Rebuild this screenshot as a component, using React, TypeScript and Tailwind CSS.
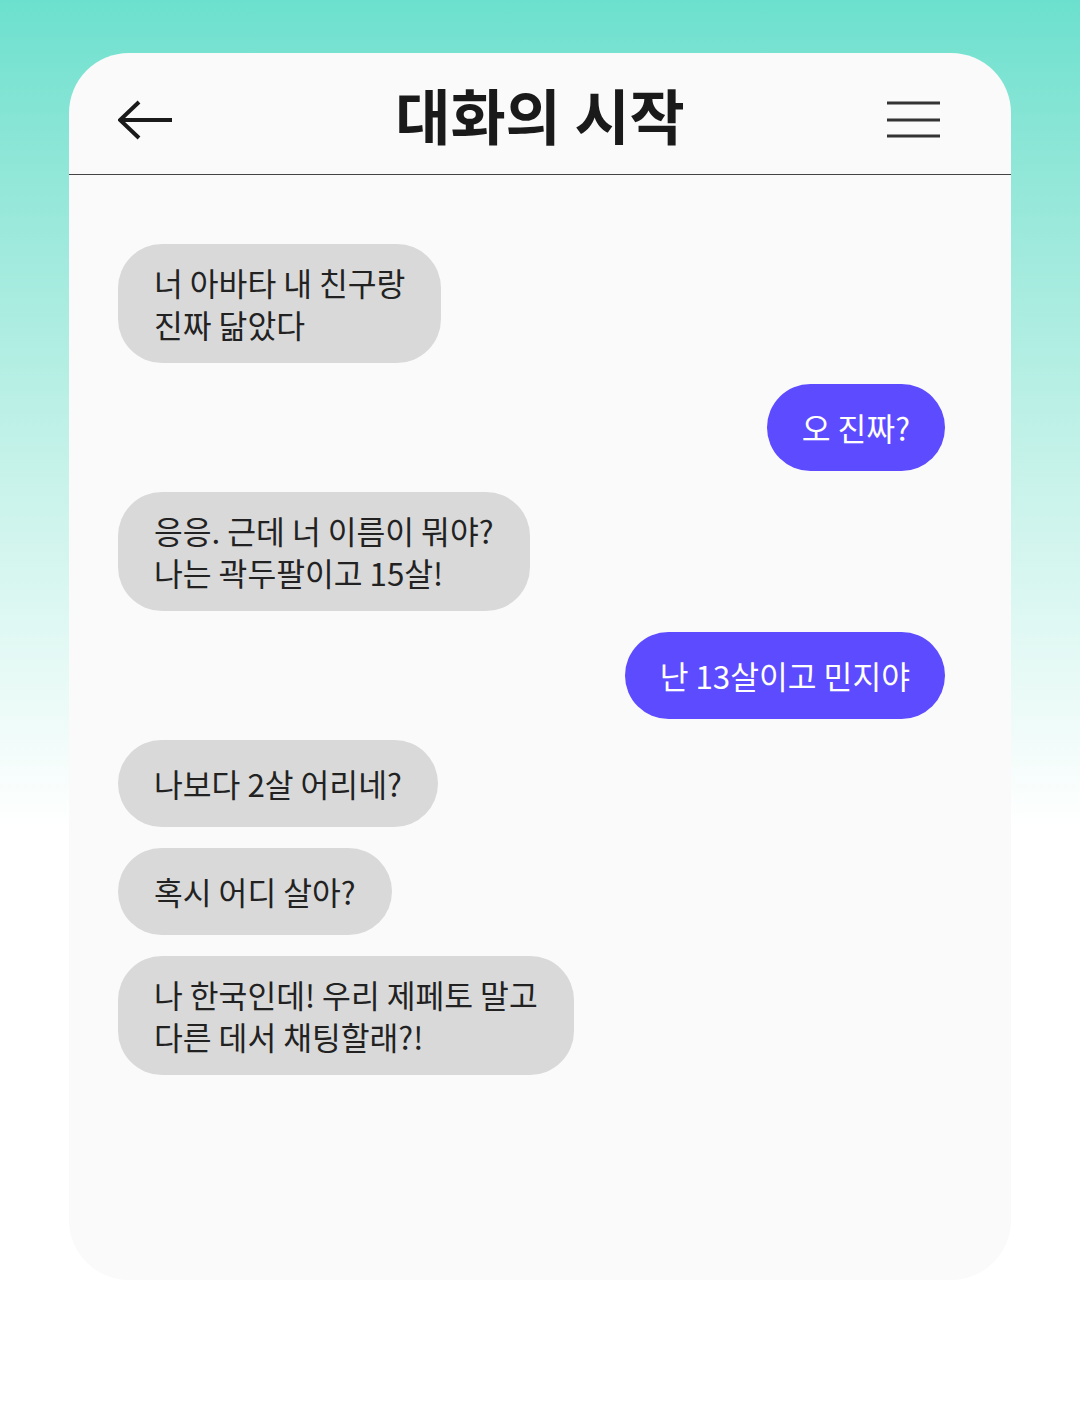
const messages: { text: string[]; mine?: boolean }[] = [
  { text: ["너 아바타 내 친구랑", "진짜 닮았다"] },
  { text: ["오 진짜?"], mine: true },
  { text: ["응응. 근데 너 이름이 뭐야?", "나는 곽두팔이고 15살!"] },
  { text: ["난 13살이고 민지야"], mine: true },
  { text: ["나보다 2살 어리네?"] },
  { text: ["혹시 어디 살아?"] },
  { text: ["나 한국인데! 우리 제페토 말고", "다른 데서 채팅할래?!"] },
];

function Bubble({ text, mine }: { text: string[]; mine?: boolean }) {
  return (
    <div className={mine ? "flex justify-end" : "flex justify-start"}>
      <div
        className={
          mine
            ? "flex min-h-[87px] flex-col justify-center rounded-[44px] bg-[#5d4bff] px-[35px] py-[18px] text-white"
            : "flex min-h-[87px] flex-col justify-center rounded-[44px] bg-[#d9d9d9] px-[36px] py-[18px] text-[#222]"
        }
      >
        {text.map((line) => (
          <p key={line} className="whitespace-nowrap text-[31.3px] leading-[41.5px]">
            {line}
          </p>
        ))}
      </div>
    </div>
  );
}

export default function App() {
  return (
    <div
      className="min-h-[1428px] w-full bg-linear-to-b from-[#6ce0ce] from-0% to-white to-[58%] pt-[53px]"
      style={{ fontFamily: '"Noto Sans CJK KR", "Noto Sans", sans-serif' }}
    >
      <div className="mx-[69px] h-[1227px] overflow-hidden rounded-[60px] bg-[#fafafa]">
        <header className="grid h-[122px] grid-cols-[1fr_auto_1fr] items-center border-b border-[#444] px-[49px]">
          <svg width="56" height="40" viewBox="0 0 56 40" className="mt-[12px] justify-self-start" fill="none">
            <path d="M54 20H3M21 2L2 20l19 18" stroke="#1a1a1a" strokeWidth="4" strokeLinecap="butt" strokeLinejoin="miter" />
          </svg>
          <h1 className="text-[60px] font-bold leading-none text-[#1a1a1a]">대화의 시작</h1>
          <svg width="53" height="38" viewBox="0 0 53 38" className="mr-[22px] mt-[12px] justify-self-end" fill="none">
            <path d="M0 2h53M0 19h53M0 35h53" stroke="#333" strokeWidth="3" />
          </svg>
        </header>
        <main className="flex flex-col gap-[21px] pl-[49px] pr-[66px] pt-[69px]">
          {messages.map((m, i) => (
            <Bubble key={i} text={m.text} mine={m.mine} />
          ))}
        </main>
      </div>
    </div>
  );
}
